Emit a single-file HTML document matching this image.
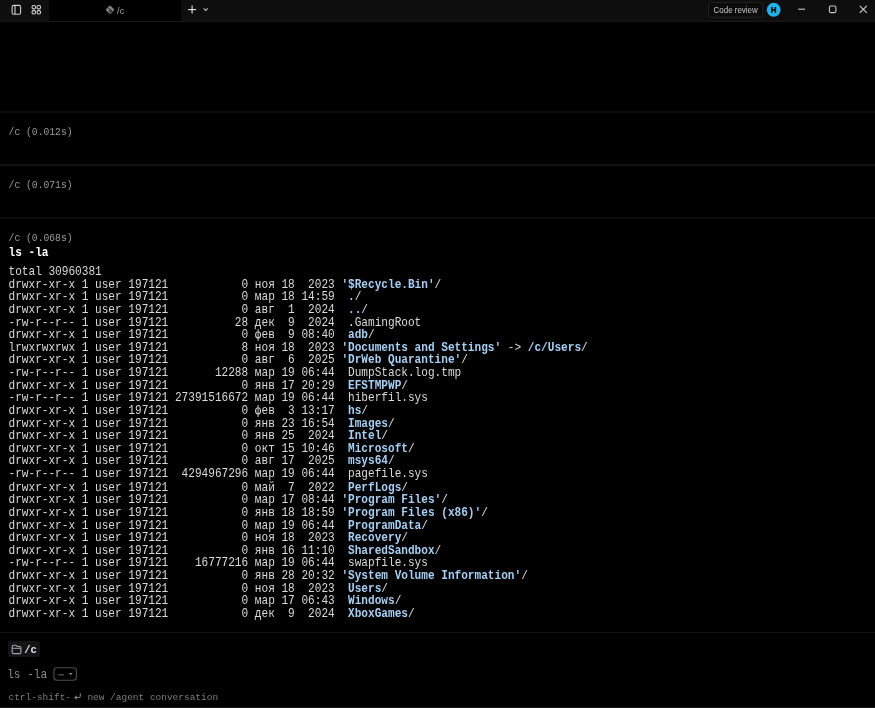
<!DOCTYPE html>
<html><head><meta charset="utf-8">
<style>
*{margin:0;padding:0;box-sizing:border-box}
html,body{width:875px;height:708px;overflow:hidden;background:#000}
body{position:relative;font-family:"Liberation Mono",monospace;color:#d6d6d6}
.abs{position:absolute;white-space:pre}
#bar{position:absolute;left:0;top:0;width:875px;height:21px;background:#0e0e0e}
#barline{position:absolute;left:0;top:21px;width:875px;height:1px;background:#181818}
#tab{position:absolute;left:49px;top:0;width:132px;height:21px;background:#000}
.sep{position:absolute;left:0;width:875px;height:1px;background:#1b1b1b}
.hdr{position:absolute;left:8.6px;font-size:9.7px;line-height:12px;color:#9a9a9a;white-space:pre;transform:scaleY(1.08);transform-origin:0 0}
#cmd{position:absolute;left:8.5px;font-size:11.1px;line-height:12px;color:#fff;font-weight:bold;white-space:pre;transform:scaleY(1.09);transform-origin:0 0}
#out{position:absolute;left:8.5px;font-size:11.1px;line-height:11.625px;white-space:pre;color:#dadada;transform:scaleY(1.09);transform-origin:0 0}
#out b{color:#a6cff3;font-weight:bold}
.sans{font-family:"Liberation Sans",sans-serif}
#root{position:absolute;left:0;top:0;width:875px;height:708px;overflow:hidden;will-change:transform}
</style></head><body><div id="root">
<div id="bar"></div>
<div id="tab"></div>
<div id="barline"></div>
<svg class="abs" style="left:0;top:0" width="875" height="21" viewBox="0 0 875 21">
  <g fill="none" stroke="#cfcfcf" stroke-width="1.1">
    <rect x="12.1" y="5.4" width="8.5" height="8.8" rx="1.8"/>
    <line x1="15" y1="5.5" x2="15" y2="14"/>
    <rect x="32.1" y="5.5" width="3.4" height="3.4" rx="1.2"/>
    <rect x="37.1" y="5.5" width="3.4" height="3.4" rx="1.2"/>
    <rect x="32.1" y="10.6" width="3.4" height="3.4" rx="1.2"/>
    <rect x="37.1" y="10.6" width="3.4" height="3.4" rx="1.2"/>
  </g>
  <rect x="106.7" y="6.45" width="6.6" height="6.6" rx="1.2" transform="rotate(45 110 9.75)" fill="#7c7c7c"/>
  <path d="M108.4 7.9 L111.5 11 M110 9.5 V12.2" stroke="#1a1a1a" stroke-width="0.85" fill="none"/>
  <circle cx="110" cy="12.1" r="0.75" fill="#1a1a1a"/><circle cx="111.5" cy="11" r="0.75" fill="#1a1a1a"/>
  <g stroke="#e0e0e0" stroke-width="1.15" fill="none">
    <line x1="188.1" y1="9.6" x2="196.1" y2="9.6"/>
    <line x1="192.1" y1="5.6" x2="192.1" y2="13.6"/>
  </g>
  <path d="M203.7 8.3 L205.7 10.5 L207.7 8.3" stroke="#c4c4c4" stroke-width="1.1" fill="none"/>
  <rect x="708.6" y="2.6" width="54.2" height="14.5" rx="3" fill="#0b0b0b" stroke="#222" stroke-width="1"/>
  <circle cx="773.7" cy="9.8" r="6.95" fill="#20b2e8"/>
  <path d="M771.9 7 V12.7 M775.3 7 V12.7 M771.9 9.85 H775.3" stroke="#08161e" stroke-width="1.7" fill="none"/>
  <line x1="798.2" y1="9.2" x2="805.1" y2="9.2" stroke="#c8c8c8" stroke-width="1.1"/>
  <rect x="829.4" y="6" width="6.5" height="6.6" rx="1.5" fill="none" stroke="#c8c8c8" stroke-width="1.1"/>
  <path d="M859.8 5.8 L866.8 12.8 M866.8 5.8 L859.8 12.8" stroke="#d0d0d0" stroke-width="1.1" fill="none"/>
</svg>
<div class="abs sans" style="left:117px;top:5.2px;font-size:9px;line-height:12px;color:#aaaaaa;letter-spacing:0.15px">/c</div>
<div class="abs sans" style="left:713.6px;top:3.6px;font-size:7.95px;line-height:12px;color:#c8c8c8;transform:scaleY(1.16);transform-origin:0 0">Code review</div>

<div class="sep" style="top:111px;height:2px;background:#0d0d0d"></div>
<div class="hdr" style="top:125.8px">/c (0.012s)</div>
<div class="sep" style="top:164px;height:2px;background:#101010"></div>
<div class="hdr" style="top:179.3px">/c (0.071s)</div>
<div class="sep" style="top:217px;height:2px;background:#0c0c0c"></div>
<div class="hdr" style="top:232.3px">/c (0.068s)</div>
<div id="cmd" style="top:245.6px">ls -la</div>
<div id="out" style="top:266.2px">total 30960381
drwxr-xr-x 1 user 197121           0 ноя 18  2023 <b>&#x27;$Recycle.Bin&#x27;</b>/
drwxr-xr-x 1 user 197121           0 мар 18 14:59  <b>.</b>/
drwxr-xr-x 1 user 197121           0 авг  1  2024  <b>..</b>/
-rw-r--r-- 1 user 197121          28 дек  9  2024  .GamingRoot
drwxr-xr-x 1 user 197121           0 фев  9 08:40  <b>adb</b>/
lrwxrwxrwx 1 user 197121           8 ноя 18  2023 <b>&#x27;Documents and Settings&#x27;</b> -&gt; <b>/c/Users</b>/
drwxr-xr-x 1 user 197121           0 авг  6  2025 <b>&#x27;DrWeb Quarantine&#x27;</b>/
-rw-r--r-- 1 user 197121       12288 мар 19 06:44  DumpStack.log.tmp
drwxr-xr-x 1 user 197121           0 янв 17 20:29  <b>EFSTMPWP</b>/
-rw-r--r-- 1 user 197121 27391516672 мар 19 06:44  hiberfil.sys
drwxr-xr-x 1 user 197121           0 фев  3 13:17  <b>hs</b>/
drwxr-xr-x 1 user 197121           0 янв 23 16:54  <b>Images</b>/
drwxr-xr-x 1 user 197121           0 янв 25  2024  <b>Intel</b>/
drwxr-xr-x 1 user 197121           0 окт 15 10:46  <b>Microsoft</b>/
drwxr-xr-x 1 user 197121           0 авг 17  2025  <b>msys64</b>/
-rw-r--r-- 1 user 197121  4294967296 мар 19 06:44  pagefile.sys
drwxr-xr-x 1 user 197121           0 май  7  2022  <b>PerfLogs</b>/
drwxr-xr-x 1 user 197121           0 мар 17 08:44 <b>&#x27;Program Files&#x27;</b>/
drwxr-xr-x 1 user 197121           0 янв 18 18:59 <b>&#x27;Program Files (x86)&#x27;</b>/
drwxr-xr-x 1 user 197121           0 мар 19 06:44  <b>ProgramData</b>/
drwxr-xr-x 1 user 197121           0 ноя 18  2023  <b>Recovery</b>/
drwxr-xr-x 1 user 197121           0 янв 16 11:10  <b>SharedSandbox</b>/
-rw-r--r-- 1 user 197121    16777216 мар 19 06:44  swapfile.sys
drwxr-xr-x 1 user 197121           0 янв 28 20:32 <b>&#x27;System Volume Information&#x27;</b>/
drwxr-xr-x 1 user 197121           0 ноя 18  2023  <b>Users</b>/
drwxr-xr-x 1 user 197121           0 мар 17 06:43  <b>Windows</b>/
drwxr-xr-x 1 user 197121           0 дек  9  2024  <b>XboxGames</b>/</div>

<div class="sep" style="top:632px;background:#151515"></div>
<div class="abs" style="left:8.3px;top:641px;width:31.4px;height:16.2px;border-radius:3.5px;background:#141414"></div>
<svg class="abs" style="left:0;top:630px" width="100" height="78" viewBox="0 630 100 78">
  <path d="M12.2 652.4 V646.4 Q12.2 645.2 13.4 645.2 H15.6 Q16.2 645.2 16.6 645.7 L17.2 646.5 H19.7 Q20.9 646.5 20.9 647.7 V652.4 Q20.9 653.6 19.7 653.6 H13.4 Q12.2 653.6 12.2 652.4 Z" fill="none" stroke="#a0a0a8" stroke-width="1.15"/>
  <line x1="12.2" y1="648.3" x2="20.9" y2="648.3" stroke="#a0a0a8" stroke-width="1"/>
  <rect x="53.9" y="667.7" width="22.5" height="12.6" rx="3" fill="none" stroke="#4e4e4e" stroke-width="1.1"/>
  <path d="M58 674.8 H63.8" stroke="#4a4a4a" stroke-width="1.3" fill="none"/><path d="M62.4 673.9 L64.2 674.8 L62.4 675.7 Z" fill="#555"/>
  <path d="M68.9 673 L72.6 673 L70.75 675.2 Z" fill="#8c8c8c"/>
</svg>
<div class="abs" style="left:24.3px;top:644.2px;font-size:10.5px;line-height:12px;color:#e2e2ec;font-weight:bold">/c</div>
<div class="abs" style="left:7.2px;top:667.5px;font-size:11.1px;line-height:12px;color:#8a8a8a;transform:scaleY(1.09);transform-origin:0 0">ls -la</div>
<div class="abs" style="left:8.5px;top:691.9px;font-size:9.48px;line-height:12px;color:#7e7e7e">ctrl-shift-</div>
<svg class="abs" style="left:72px;top:690px" width="12" height="14" viewBox="72 690 12 14">
  <path d="M80.3 693.3 V696 Q80.3 697.5 78.8 697.5 H76" stroke="#7e7e7e" stroke-width="1.1" fill="none"/><path d="M74 697.5 L76.8 695.2 L76.8 699.8 Z" fill="#7e7e7e"/>
</svg>
<div class="abs" style="left:87.4px;top:691.9px;font-size:9.48px;line-height:12px;color:#7e7e7e">new /agent conversation</div>
<div class="sep" style="top:707px;background:#1a1a1a"></div>
</div></body></html>
